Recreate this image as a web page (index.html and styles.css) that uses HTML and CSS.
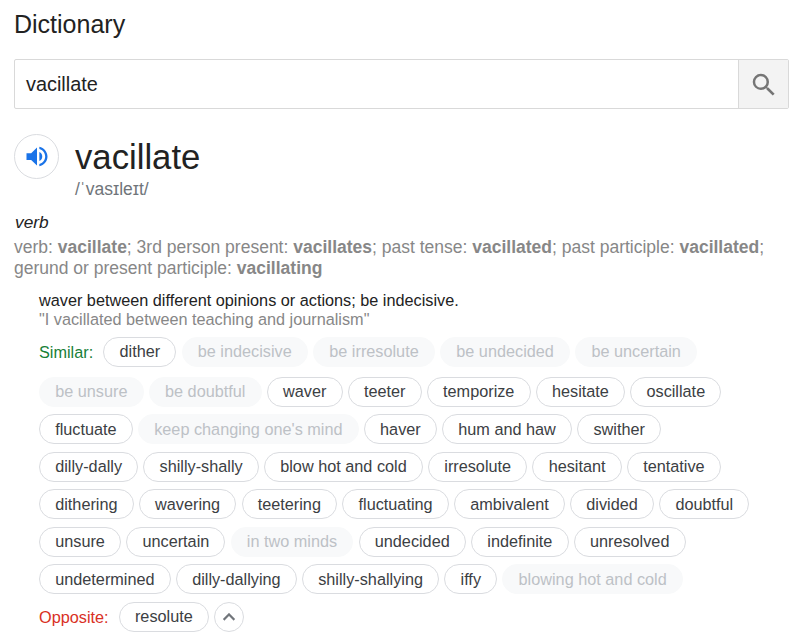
FILE: index.html
```
<!DOCTYPE html>
<html lang="en">
<head>
<meta charset="utf-8">
<title>Dictionary</title>
<link rel="stylesheet" href="styles.css">
</head>
<body>
<main class="dictionary">
  <h1 class="heading">Dictionary</h1>
  <form class="search">
    <div class="search-field">vacillate</div>
    <button class="search-button" type="button" aria-label="Search">
      <svg width="30" height="30" viewBox="0 0 24 24"><path fill="#757575" d="M15.500 14h-.79l-.28-.27A6.470 6.470 0 0 0 16 9.500 6.500 6.500 0 1 0 9.500 16c1.610 0 3.090-.59 4.230-1.570l.27.28v.79l5 4.990L20.490 19l-4.990-5zm-6 0C7.010 14 5 11.990 5 9.500S7.010 5 9.500 5 14 7.010 14 9.500 11.990 14 9.500 14z"/></svg>
    </button>
  </form>
  <header class="entry">
    <button class="speaker" type="button" aria-label="Listen">
      <svg width="28" height="27" viewBox="0 0 24 24" preserveAspectRatio="none"><path fill="#1a73e8" d="M3 9v6h4l5 5V4L7 9H3zm13.500 3A4.500 4.500 0 0 0 14 7.970v8.050A4.470 4.470 0 0 0 16.500 12zM14 3.230v2.060c2.890.86 5 3.540 5 6.710s-2.110 5.850-5 6.710v2.060c4.010-.91 7-4.490 7-8.770s-2.990-7.860-7-8.770z"/></svg>
    </button>
    <div>
      <h2 class="word">vacillate</h2>
      <div class="phonetic">/ˈvasɪleɪt/</div>
    </div>
  </header>
  <div class="part">verb</div>
  <div class="forms">
    <div class="forms-first">verb: <b>vacillate</b>; 3rd person present: <b>vacillates</b>; past tense: <b>vacillated</b>; past participle: <b>vacillated</b>;</div>
    <div>gerund or present participle: <b>vacillating</b></div>
  </div>
  <section class="sense">
    <div class="definition">waver between different opinions or actions; be indecisive.</div>
    <div class="example">"I vacillated between teaching and journalism"</div>
    <div class="row row-first"><span class="label similar">Similar:</span><span class="chip">dither</span><span class="chip muted">be indecisive</span><span class="chip muted">be irresolute</span><span class="chip muted">be undecided</span><span class="chip muted">be uncertain</span></div>
    <div class="row"><span class="chip muted">be unsure</span><span class="chip muted">be doubtful</span><span class="chip">waver</span><span class="chip">teeter</span><span class="chip">temporize</span><span class="chip">hesitate</span><span class="chip">oscillate</span></div>
    <div class="row"><span class="chip">fluctuate</span><span class="chip muted">keep changing one's mind</span><span class="chip">haver</span><span class="chip">hum and haw</span><span class="chip">swither</span></div>
    <div class="row"><span class="chip">dilly-dally</span><span class="chip">shilly-shally</span><span class="chip">blow hot and cold</span><span class="chip">irresolute</span><span class="chip">hesitant</span><span class="chip">tentative</span></div>
    <div class="row"><span class="chip">dithering</span><span class="chip">wavering</span><span class="chip">teetering</span><span class="chip">fluctuating</span><span class="chip">ambivalent</span><span class="chip">divided</span><span class="chip">doubtful</span></div>
    <div class="row"><span class="chip">unsure</span><span class="chip">uncertain</span><span class="chip muted">in two minds</span><span class="chip">undecided</span><span class="chip">indefinite</span><span class="chip">unresolved</span></div>
    <div class="row"><span class="chip">undetermined</span><span class="chip">dilly-dallying</span><span class="chip">shilly-shallying</span><span class="chip">iffy</span><span class="chip muted">blowing hot and cold</span></div>
    <div class="row"><span class="label opposite">Opposite:</span><span class="chip">resolute</span><button class="collapse" type="button" aria-label="Show less"><svg width="24" height="24" viewBox="0 0 24 24"><path fill="#70757a" d="M12 8l-6 6 1.410 1.410L12 10.830l4.590 4.580L18 14z" stroke="#70757a" stroke-width=".3"/></svg></button></div>
  </section>
</main>
</body>
</html>
```

FILE: styles.css
```
* {
  box-sizing: border-box;
}

body {
  margin: 0;
  background: #fff;
  color: #222;
  font-family: "Liberation Sans", Arial, sans-serif;
}

.dictionary {
  padding: 8px 20px 0 14px;
}

.heading {
  margin: 0;
  font-size: 25px;
  font-weight: 400;
  line-height: 32px;
}

.search {
  display: flex;
  height: 50px;
  margin-top: 19px;
  border: 1px solid #d9d9d9;
  border-radius: 2px;
}

.search-field {
  flex: 1;
  padding-left: 11px;
  font-size: 19.9px;
  line-height: 48px;
}

.search-button {
  display: flex;
  align-items: center;
  justify-content: center;
  width: 50px;
  padding: 1px 0 0;
  border: 0;
  border-left: 1px solid #d9d9d9;
  background: #f3f3f3;
}

.entry {
  display: flex;
  gap: 16px;
  margin-top: 25px;
}

.speaker {
  display: flex;
  align-items: center;
  justify-content: center;
  width: 45px;
  height: 45px;
  padding: 0;
  border: 1px solid #dadce0;
  border-radius: 50%;
  background: #fff;
}

.word {
  margin: 0 0 -2px;
  font-size: 34.7px;
  font-weight: 400;
  line-height: 47px;
}

.phonetic {
  color: #70757a;
  font-size: 17.5px;
  line-height: 20px;
}

.part {
  margin-top: 12px;
  padding-left: 1px;
  font-size: 17.3px;
  font-style: italic;
  line-height: 22px;
}

.forms {
  margin-top: 4px;
  color: #878787;
  font-size: 17.51px;
  line-height: 21px;
  white-space: nowrap;
}

.sense {
  padding: 12px 0 0 25px;
  font-size: 16.25px;
  line-height: 19px;
}

.example {
  color: #878787;
}

.row {
  display: flex;
  gap: 5.2px;
  height: 30px;
  margin-bottom: 7.5px;
  white-space: nowrap;
}

.row-first {
  margin-top: 8px;
  margin-bottom: 9.8px;
}

.label {
  padding-right: 5px;
  line-height: 31px;
}

.similar {
  color: #188038;
}

.opposite {
  color: #d93025;
}

.chip {
  padding: 0 15.2px;
  border: 1px solid #dadce0;
  border-radius: 15px;
  color: #3c4043;
  line-height: 27.2px;
}

.row:nth-child(2n + 5) .chip {
  line-height: 28px;
}

.muted,
.row .muted {
  border-color: #f8f9fa;
  background: #f8f9fa;
  color: #bdc1c6;
}

.collapse {
  display: flex;
  align-items: center;
  justify-content: center;
  width: 30px;
  height: 30px;
  padding: 0;
  border: 1px solid #dadce0;
  border-radius: 50%;
  background: #fff;
}
```
